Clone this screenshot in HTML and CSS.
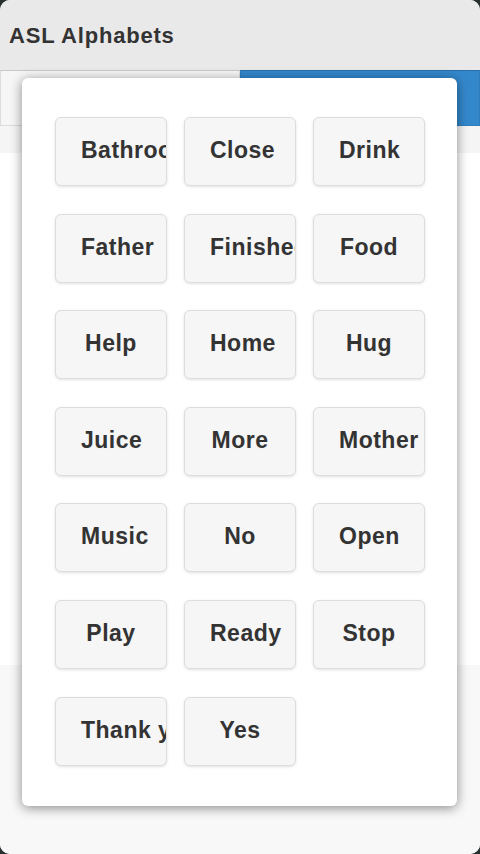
FILE: index.html
```html
<!DOCTYPE html>
<html lang="en">
<head>
    <meta charset="UTF-8">
    <meta name="viewport" content="width=device-width, initial-scale=1.0">
    <title>ASL Alphabets</title>
    <link rel="stylesheet" href="styles.css">
</head>
<body>
    <div class="screen">
        <div class="header">
            <h1>ASL Alphabets</h1>
        </div>
        <div class="tabs">
            <div class="tab"></div>
            <div class="tab active"></div>
        </div>
        <div class="strip"></div>
        <div class="content"></div>
        <div class="footer"></div>

        <div class="popup">
            <div class="words">
                <a class="word">Bathroom</a>
                <a class="word">Close</a>
                <a class="word">Drink</a>
                <a class="word">Father</a>
                <a class="word">Finished</a>
                <a class="word">Food</a>
                <a class="word">Help</a>
                <a class="word">Home</a>
                <a class="word">Hug</a>
                <a class="word">Juice</a>
                <a class="word">More</a>
                <a class="word">Mother</a>
                <a class="word">Music</a>
                <a class="word">No</a>
                <a class="word">Open</a>
                <a class="word">Play</a>
                <a class="word">Ready</a>
                <a class="word">Stop</a>
                <a class="word">Thank you</a>
                <a class="word">Yes</a>
            </div>
        </div>
    </div>
</body>
</html>
```

FILE: styles.css
```css
html, body {
    margin: 0;
    height: 100%;
}

body {
    background-color: #26302f;
    font-family: "Liberation Sans", Arial, sans-serif;
    color: #333;
}

.screen {
    position: relative;
    height: 854px;
    display: flex;
    flex-direction: column;
    border-radius: 10px;
    overflow: hidden;
    background: #f8f8f8;
}

.header {
    height: 70px;
    background-color: #e9e9e9;
    box-sizing: border-box;
    padding: 23px 0 0 9px;
}

.header h1 {
    margin: 0;
    font-size: 22px;
    line-height: 26px;
    font-weight: bold;
    color: #333;
    letter-spacing: 0.8px;
}

.tabs {
    display: flex;
    height: 56px;
}

.tab {
    flex: 1;
    background-color: #f6f6f6;
    border: 1px solid #dcdcdc;
    border-top-color: #c8c8c8;
}

.tab.active {
    background-color: #3388cc;
    border-color: #2f7dbd;
    border-top-color: #2a6ea8;
}

.strip {
    height: 27px;
    background-color: #f5f5f5;
}

.content {
    height: 512px;
    background-color: #fff;
}

.footer {
    flex: 1;
    background-color: #f8f8f8;
}

.popup {
    position: absolute;
    top: 78px;
    left: 22px;
    width: 435px;
    box-sizing: border-box;
    padding: 39px 32px 40px 33px;
    background-color: #fff;
    border-radius: 6px;
    box-shadow: 0 2px 12px rgba(0, 0, 0, 0.45);
}

.words {
    display: grid;
    grid-template-columns: repeat(3, 112px);
    column-gap: 17px;
    row-gap: 27.6px;
}

.word {
    display: block;
    height: 69px;
    box-sizing: border-box;
    padding: 0 25px;
    background-color: #f6f6f6;
    border: 1px solid #dddddd;
    border-radius: 6px;
    box-shadow: 0 1px 3px rgba(0, 0, 0, 0.12);
    font-size: 23px;
    font-weight: bold;
    line-height: 65px;
    letter-spacing: 0.5px;
    text-align: center;
    white-space: nowrap;
    overflow: hidden;
    color: #333;
    text-shadow: 0 1px 0 #f3f3f3;
    cursor: pointer;
}
```
